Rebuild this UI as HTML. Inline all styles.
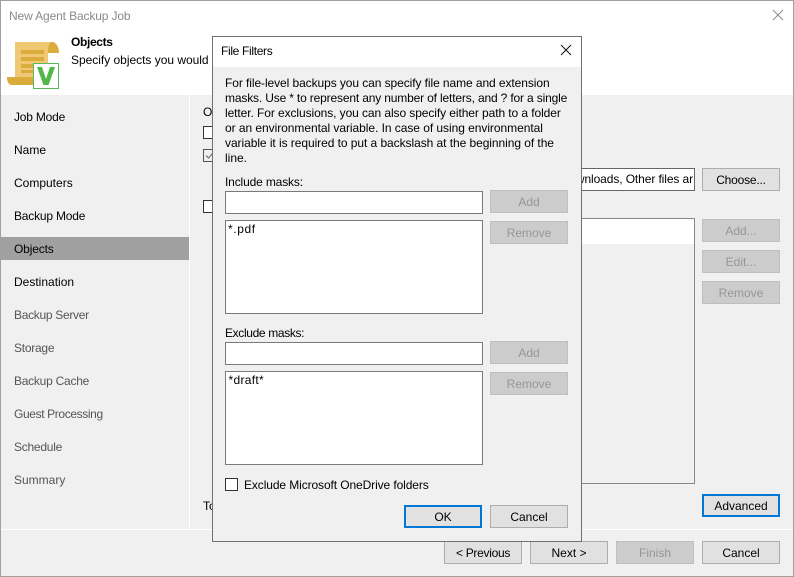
<!DOCTYPE html>
<html><head><meta charset="utf-8"><style>
html,body{margin:0;padding:0}
body{width:794px;height:577px;position:relative;overflow:hidden;background:#f0f0f0;font-family:"Liberation Sans",sans-serif;font-size:12px;color:#000}
.a{position:absolute;box-sizing:border-box}
.t{position:absolute;white-space:nowrap;line-height:15px;height:15px}
.b{position:absolute;box-sizing:border-box;width:78px;height:23px;background:#e1e1e1;border:1px solid #adadad;text-align:center;line-height:23px;white-space:nowrap}
.d{background:#cccccc;border-color:#bfbfbf;color:#969696}
.f{border:2px solid #0078d7;line-height:21px}
.i{position:absolute;box-sizing:border-box;background:#fff;border:1px solid #7a7a7a}
.c{position:absolute;box-sizing:border-box;width:13px;height:13px;background:#fff;border:1px solid #333}
.n{left:14px}
.g{color:#555}
</style></head><body>
<div class="a" style="left:0;top:0;width:794px;height:95px;background:#fff"></div>
<div class="t" style="left:9px;top:9px;color:#8a8a8a;letter-spacing:-.13px">New Agent Backup Job</div>
<svg class="a" style="left:772px;top:9px" width="12" height="12"><path d="M1 1L11 11M11 1L1 11" stroke="#8a8a8a" fill="none"/></svg>
<svg class="a" style="left:6px;top:41px" width="54" height="49" viewBox="0 0 54 49">
<path d="M41 1H46C50 1 53 6 53 12H41Z" fill="#d9ac3c"/>
<path d="M9 1H45C42 4 42 8 42 12V40H9Z" fill="#f0c873"/>
<rect x="15" y="9" width="23" height="4" fill="#d9ac3c"/><rect x="15" y="16" width="23" height="4" fill="#d9ac3c"/><rect x="15" y="23" width="15" height="4" fill="#d9ac3c"/><rect x="15" y="29" width="15" height="3" fill="#d9ac3c"/>
<path d="M1 36H27V44H6C2 44 1 40 1 36Z" fill="#d9ac3c"/>
<rect x="27.500" y="22.500" width="25" height="25" fill="#fff" stroke="#5cb85c"/>
<path d="M31 26H36L40 38L44 26H49L42.500 44H37.500Z" fill="#4fb848"/>
</svg>
<div class="t" style="left:71px;top:35px;font-weight:bold;letter-spacing:-.35px">Objects</div>
<div class="t" style="left:71px;top:53px;letter-spacing:-.02px">Specify objects you would</div>

<div class="a" style="left:0;top:0;width:1px;height:577px;background:#a0a0a0"></div>
<div class="a" style="left:793px;top:0;width:1px;height:577px;background:#a0a0a0"></div>
<div class="a" style="left:0;top:0;width:794px;height:1px;background:#a0a0a0"></div>
<div class="a" style="left:0;top:576px;width:794px;height:1px;background:#a0a0a0"></div>
<div class="a" style="left:189px;top:95px;width:1px;height:434px;background:#fff"></div>
<div class="a" style="left:1px;top:529px;width:792px;height:1px;background:#fff"></div>
<div class="a" style="left:1px;top:237px;width:188px;height:23px;background:#a0a0a0"></div>

<div class="t n" style="top:110px;letter-spacing:-.2px">Job Mode</div>
<div class="t n" style="top:143px">Name</div>
<div class="t n" style="top:176px">Computers</div>
<div class="t n" style="top:209px;letter-spacing:-.2px">Backup Mode</div>
<div class="t n" style="top:242px;letter-spacing:-.15px">Objects</div>
<div class="t n" style="top:275px">Destination</div>
<div class="t n g" style="top:308px;letter-spacing:-.3px">Backup Server</div>
<div class="t n g" style="top:341px;letter-spacing:-.25px">Storage</div>
<div class="t n g" style="top:374px;letter-spacing:-.25px">Backup Cache</div>
<div class="t n g" style="top:407px;letter-spacing:-.37px">Guest Processing</div>
<div class="t n g" style="top:440px;letter-spacing:-.25px">Schedule</div>
<div class="t n g" style="top:473px">Summary</div>

<div class="t" style="left:203px;top:105px">O</div>
<div class="c" style="left:203px;top:126px"></div>
<div class="c" style="left:203px;top:149px;background:#f0f0f0;border-color:#555"></div>
<svg class="a" style="left:203px;top:149px" width="13" height="13"><path d="M3 6.500L5.500 9L10 4" stroke="#666" fill="none"/></svg>
<div class="c" style="left:203px;top:200px"></div>
<div class="t" style="left:203px;top:499px">To</div>

<div class="i" style="left:500px;top:168px;width:195px;height:23px;overflow:hidden;border-color:#666"><span style="position:absolute;right:1px;top:3px;line-height:15px;white-space:nowrap;letter-spacing:-.1px">wnloads, Other files ar</span></div>
<div class="i" style="left:500px;top:218px;width:195px;height:266px;background:#f0f0f0;border-color:#828790"><div class="a" style="left:0;top:0;width:193px;height:25px;background:#fff"></div></div>
<div class="b" style="left:702px;top:168px;letter-spacing:-.2px">Choose...</div>
<div class="b d" style="left:702px;top:219px">Add...</div>
<div class="b d" style="left:702px;top:250px">Edit...</div>
<div class="b d" style="left:702px;top:281px">Remove</div>
<div class="b f" style="left:702px;top:494px">Advanced</div>
<div class="b" style="left:444px;top:541px;letter-spacing:-.3px">&lt; Previous</div>
<div class="b" style="left:530px;top:541px">Next &gt;</div>
<div class="b d" style="left:616px;top:541px">Finish</div>
<div class="b" style="left:702px;top:541px">Cancel</div>

<div class="a" style="left:212px;top:36px;width:370px;height:506px;background:#f0f0f0;border:1px solid #707070">
<div class="a" style="left:0;top:0;width:368px;height:30px;background:#fff"></div>
</div>
<div class="t" style="left:221px;top:44px;letter-spacing:-.33px">File Filters</div>
<svg class="a" style="left:560px;top:44px" width="12" height="12"><path d="M1 1L11 11M11 1L1 11" stroke="#111" fill="none"/></svg>
<div class="t" style="left:225px;top:76px;letter-spacing:-.08px">For file-level backups you can specify file name and extension</div>
<div class="t" style="left:225px;top:91px;letter-spacing:-.16px">masks. Use * to represent any number of letters, and ? for a single</div>
<div class="t" style="left:225px;top:106px;letter-spacing:-.085px">letter. For exclusions, you can also specify either path to a folder</div>
<div class="t" style="left:225px;top:121px;letter-spacing:-.05px">or an environmental variable. In case of using environmental</div>
<div class="t" style="left:225px;top:136px;letter-spacing:-.06px">variable it is required to put a backslash at the beginning of the</div>
<div class="t" style="left:225px;top:151px">line.</div>
<div class="t" style="left:225px;top:175px;letter-spacing:-.15px">Include masks:</div>
<div class="i" style="left:225px;top:191px;width:258px;height:23px"></div>
<div class="b d" style="left:490px;top:190px">Add</div>
<div class="i" style="left:225px;top:220px;width:258px;height:94px"><span class="t" style="left:2px;top:1px;letter-spacing:.6px">*.pdf</span></div>
<div class="b d" style="left:490px;top:221px">Remove</div>
<div class="t" style="left:225px;top:326px;letter-spacing:-.35px">Exclude masks:</div>
<div class="i" style="left:225px;top:342px;width:258px;height:23px"></div>
<div class="b d" style="left:490px;top:341px">Add</div>
<div class="i" style="left:225px;top:371px;width:258px;height:94px"><span class="t" style="left:2.500px;top:1px;letter-spacing:.3px">*draft*</span></div>
<div class="b d" style="left:490px;top:372px">Remove</div>
<div class="c" style="left:225px;top:478px"></div>
<div class="t" style="left:244px;top:478px;letter-spacing:-.1px">Exclude Microsoft OneDrive folders</div>
<div class="b f" style="left:404px;top:505px">OK</div>
<div class="b" style="left:490px;top:505px">Cancel</div>
</body></html>
